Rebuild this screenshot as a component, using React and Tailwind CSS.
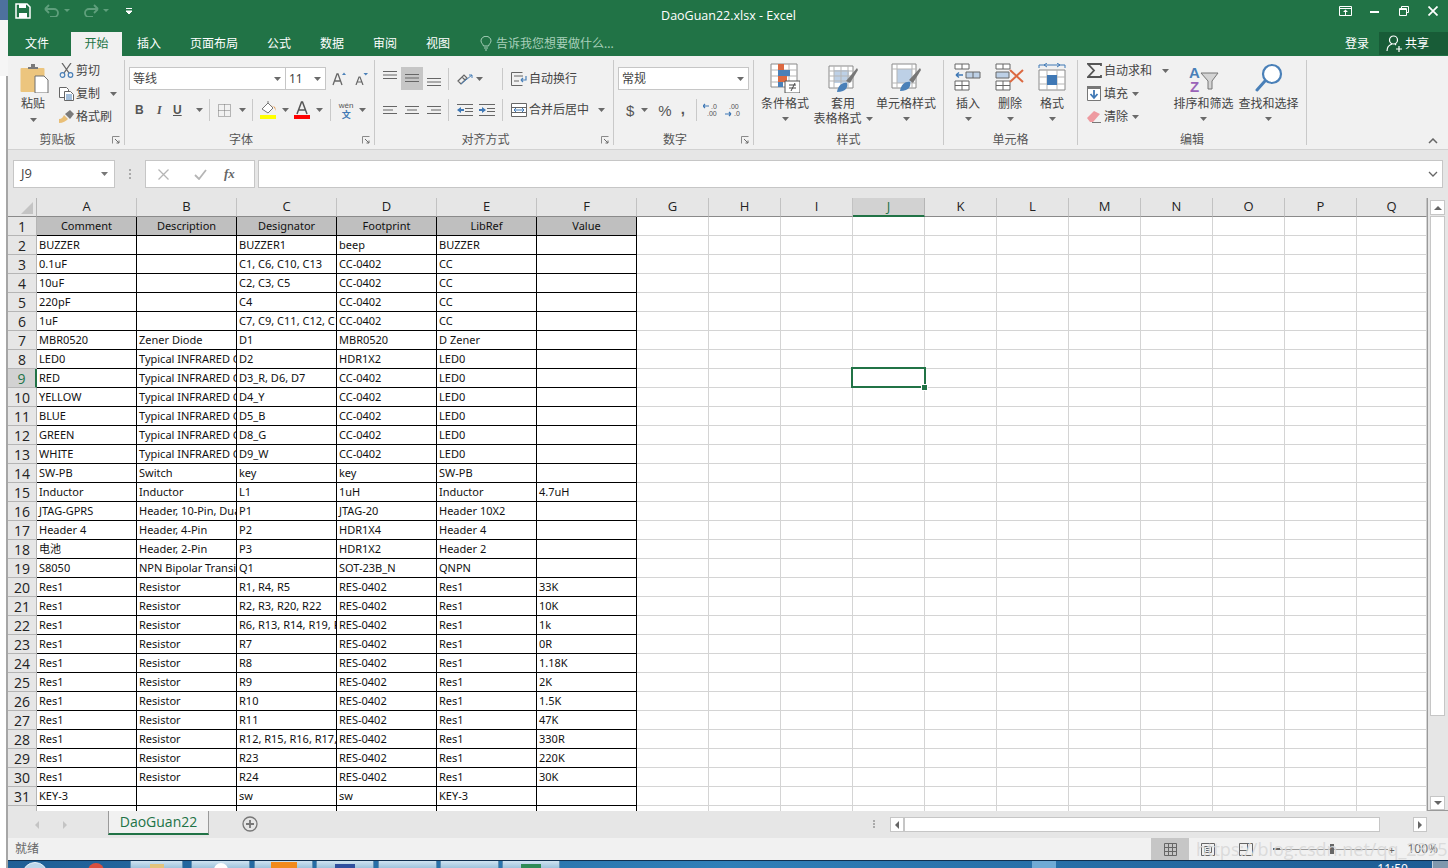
import React from "react";

// spreadsheet content, one array per row (A..F)
const RES = "Resistor";
const IR = "Typical INFRARED GaAs LED";
const ROWS = [
  ["BUZZER", "", "BUZZER1", "beep", "BUZZER", ""],
  ["0.1uF", "", "C1, C6, C10, C13", "CC-0402", "CC", ""],
  ["10uF", "", "C2, C3, C5", "CC-0402", "CC", ""],
  ["220pF", "", "C4", "CC-0402", "CC", ""],
  ["1uF", "", "C7, C9, C11, C12, C14", "CC-0402", "CC", ""],
  ["MBR0520", "Zener Diode", "D1", "MBR0520", "D Zener", ""],
  ["LED0", IR, "D2", "HDR1X2", "LED0", ""],
  ["RED", IR, "D3_R, D6, D7", "CC-0402", "LED0", ""],
  ["YELLOW", IR, "D4_Y", "CC-0402", "LED0", ""],
  ["BLUE", IR, "D5_B", "CC-0402", "LED0", ""],
  ["GREEN", IR, "D8_G", "CC-0402", "LED0", ""],
  ["WHITE", IR, "D9_W", "CC-0402", "LED0", ""],
  ["SW-PB", "Switch", "key", "key", "SW-PB", ""],
  ["Inductor", "Inductor", "L1", "1uH", "Inductor", "4.7uH"],
  ["JTAG-GPRS", "Header, 10-Pin, Dual row", "P1", "JTAG-20", "Header 10X2", ""],
  ["Header 4", "Header, 4-Pin", "P2", "HDR1X4", "Header 4", ""],
  ["电池", "Header, 2-Pin", "P3", "HDR1X2", "Header 2", ""],
  ["S8050", "NPN Bipolar Transistor", "Q1", "SOT-23B_N", "QNPN", ""],
  ["Res1", RES, "R1, R4, R5", "RES-0402", "Res1", "33K"],
  ["Res1", RES, "R2, R3, R20, R22", "RES-0402", "Res1", "10K"],
  ["Res1", RES, "R6, R13, R14, R19, R21", "RES-0402", "Res1", "1k"],
  ["Res1", RES, "R7", "RES-0402", "Res1", "0R"],
  ["Res1", RES, "R8", "RES-0402", "Res1", "1.18K"],
  ["Res1", RES, "R9", "RES-0402", "Res1", "2K"],
  ["Res1", RES, "R10", "RES-0402", "Res1", "1.5K"],
  ["Res1", RES, "R11", "RES-0402", "Res1", "47K"],
  ["Res1", RES, "R12, R15, R16, R17, R18", "RES-0402", "Res1", "330R"],
  ["Res1", RES, "R23", "RES-0402", "Res1", "220K"],
  ["Res1", RES, "R24", "RES-0402", "Res1", "30K"],
  ["KEY-3", "", "sw", "sw", "KEY-3", ""],
  ["", "", "", "", "", ""],
];
const HEAD = ["Comment", "Description", "Designator", "Footprint", "LibRef", "Value"];
const COLS = ["A", "B", "C", "D", "E", "F"];
const EMPTY = ["G", "H", "I", "J", "K", "L", "M", "N", "O", "P", "Q"];

const Caret = ({ className = "" }) => (
  <svg width="7" height="4" viewBox="0 0 7 4" className={`shrink-0 ${className}`}>
    <path d="M0 0h7L3.5 4z" fill="#6a6a6a" />
  </svg>
);

const Launcher = () => (
  <svg width="8" height="8" viewBox="0 0 8 8" className="shrink-0">
    <path d="M0.5 7.5V0.5H7.5" fill="none" stroke="#8a8a8a" />
    <path d="M3 3l4 4M7 4.500V7H4.500" fill="none" stroke="#6a6a6a" />
  </svg>
);

// ribbon group: fixed width, content on top, caption at the bottom
const Group = ({ w, label, launcher, children }) => (
  <div className="flex flex-col h-[85px] shrink-0 border-r border-[#c9c9c9]" style={{ width: w }}>
    <div className="h-[68px] shrink-0 flex">{children}</div>
    <div className="h-[17px] shrink-0 flex items-center pt-[6px]">
      <span className={`w-full text-center text-[12px] leading-none text-[#555] ${launcher ? "pr-[5px]" : ""}`}>{label}</span>
      {launcher && <span className="mr-[4px] flex"><Launcher /></span>}
    </div>
  </div>
);

const Lines = ({ rows }) => (
  <svg width="14" height="11" viewBox="0 0 14 11" className="shrink-0">
    {rows.map((r, i) => (
      <path key={i} d={`M${r[0]} ${i * 3.5 + 1.5}H${r[1]}`} stroke="#666" strokeWidth="1" />
    ))}
  </svg>
);

const TallBtn = ({ w, icon, l1, l2, caretRight, ml = 0 }) => (
  <div className="flex flex-col items-center shrink-0" style={{ width: w, marginLeft: ml }}>
    <div className="h-[33px] flex items-end">{icon}</div>
    <div className="mt-[3px] text-[12px] leading-[15px] text-[#444] whitespace-nowrap">{l1}</div>
    {l2 ? (
      <div className="flex items-center gap-[4px] text-[12px] leading-[15px] text-[#444] whitespace-nowrap">
        {l2}
        {caretRight && <Caret />}
      </div>
    ) : (
      <Caret className="mt-[6px]" />
    )}
  </div>
);

const SmallRow = ({ icon, text, caretMl }) => (
  <div className="h-[23px] flex items-center text-[12px] text-[#444] whitespace-nowrap">
    <span className="w-[18px] flex justify-center shrink-0">{icon}</span>
    <span className="ml-[1px]">{text}</span>
    {caretMl != null && <span className="flex" style={{ marginLeft: caretMl }}><Caret /></span>}
  </div>
);

const Sep = ({ h = 22, ml = 0, mr = 0 }) => <div className="w-px bg-[#c9c9c9] shrink-0" style={{ height: h, marginLeft: ml, marginRight: mr }} />;

const GridIcon = ({ children, w = 30, h = 30 }) => (
  <svg width={w} height={h} viewBox={`0 0 ${w} ${h}`} className="shrink-0">{children}</svg>
);

const WinBtn = ({ children }) => <div className="w-[29px] flex justify-center">{children}</div>;

function TitleBar() {
  return (
    <div className="h-[32px] bg-[#217346] flex items-center shrink-0">
      <svg width="16" height="16" viewBox="0 0 16 16" className="ml-[7px] -mt-[11px] shrink-0">
        <path d="M1 1h11l3 3v11H1z" fill="none" stroke="#fff" strokeWidth="1.500" />
        <path d="M4 1h7v4H4z" fill="#fff" />
        <path d="M4 10h8v5H4z" fill="#fff" />
      </svg>
      <svg width="16" height="13" viewBox="0 0 16 13" className="ml-[13px] -mt-[11px] shrink-0">
        <path d="M1 5h9a4 4 0 0 1 0 8H6M1 5l4-4M1 5l4 4" fill="none" stroke="#5f9f7c" strokeWidth="1.800" />
      </svg>
      <svg width="6" height="3" viewBox="0 0 6 3" className="ml-[4px] -mt-[11px]"><path d="M0 0h6L3 3z" fill="#5f9f7c" /></svg>
      <svg width="16" height="13" viewBox="0 0 16 13" className="ml-[13px] -mt-[11px] shrink-0">
        <path d="M15 5H6a4 4 0 0 0 0 8h4M15 5l-4-4M15 5l-4 4" fill="none" stroke="#5f9f7c" strokeWidth="1.800" />
      </svg>
      <svg width="6" height="3" viewBox="0 0 6 3" className="ml-[4px] -mt-[11px]"><path d="M0 0h6L3 3z" fill="#5f9f7c" /></svg>
      <svg width="6" height="6" viewBox="0 0 6 6" className="ml-[17px] -mt-[11px]"><path d="M0 0.500h6M0 3h6L3 6z" stroke="#fff" fill="#fff" strokeWidth="1" /></svg>
      <div className="flex-1 flex justify-center pr-[6px] text-[12.5px] text-white font-['Open_Sans','Liberation_Sans',sans-serif]">
        DaoGuan22.xlsx - Excel
      </div>
      <div className="flex items-center -mt-[11px] mr-[1px]">
        <WinBtn>
          <svg width="13" height="10" viewBox="0 0 13 10"><path d="M0.500 0.500h12v9H0.500zM0.500 2.500h12" fill="none" stroke="#fff" /><path d="M6.500 3.500L4 6h5zM6 6h1v3H6z" fill="#fff" /></svg>
        </WinBtn>
        <WinBtn><div className="w-[9px] h-[2px] bg-white mt-[3px]" /></WinBtn>
        <WinBtn>
          <svg width="10" height="10" viewBox="0 0 10 10"><path d="M2.500 2.500V0.500h7v6H7.500M0.500 2.500h7v7h-7zM0.500 3.500h7" fill="none" stroke="#fff" /></svg>
        </WinBtn>
        <WinBtn>
          <svg width="10" height="10" viewBox="0 0 10 10"><path d="M0.500 0.500l9 9M9.500 0.500l-9 9" stroke="#fff" strokeWidth="1.700" /></svg>
        </WinBtn>
      </div>
    </div>
  );
}

function TabBar() {
  const tabs = [
    ["插入", 15], ["页面布局", 29], ["公式", 29], ["数据", 29], ["审阅", 29], ["视图", 29],
  ];
  return (
    <div className="h-[24px] bg-[#217346] flex items-stretch text-[12px] leading-[23px] text-white shrink-0">
      <span className="ml-[17px]">文件</span>
      <span className="ml-[22px] w-[51px] bg-[#f1f1f1] text-[#217346] text-center">开始</span>
      {tabs.map(([t, ml]) => (
        <span key={t} style={{ marginLeft: ml }}>{t}</span>
      ))}
      <svg width="12" height="15" viewBox="0 0 12 15" className="ml-[30px] mt-[4px] shrink-0">
        <path d="M3.500 10C3 8 1 7 1 4.800A5 4.500 0 0 1 11 4.800C11 7 9 8 8.500 10zM4 12h4M5 14h2" fill="none" stroke="#a8d0ba" />
      </svg>
      <span className="ml-[4px] text-[12px] text-[#a8d0ba]">告诉我您想要做什么...</span>
      <span className="ml-auto">登录</span>
      <div className="ml-[10px] w-[69px] h-[23px] bg-[#185c37] flex items-center">
        <svg width="17" height="17" viewBox="0 0 17 17" className="ml-[7px] shrink-0">
          <circle cx="7.500" cy="5" r="4" fill="none" stroke="#fff" strokeWidth="1.200" />
          <path d="M1 16c0-4 2-6 5-7M9 9l1 1M10 14h6M13 11v6" fill="none" stroke="#fff" strokeWidth="1.200" />
        </svg>
        <span className="ml-[2px] text-[12px]">共享</span>
      </div>
    </div>
  );
}

function Ribbon() {
  return (
    <div className="h-[94px] bg-[#f1f1f1] border-b border-[#d2d2d2] pt-[4px] flex shrink-0 relative">
      {/* 剪贴板 */}
      <Group w={117} label="剪贴板" launcher>
        <div className="w-[50px] flex flex-col items-center shrink-0">
          <svg width="29" height="29" viewBox="0 0 29 29" className="mt-[4px] ml-[3px] shrink-0">
            <rect x="0.500" y="4" width="24" height="24" rx="1" fill="#ecc57e" />
            <path d="M8 5V3h3V0h4v3h3v2z" fill="#7a7a7a" />
            <path d="M15 12h9l4 4v13H15z" fill="#fff" stroke="#6f6f6f" />
          </svg>
          <span className="mt-[3px] text-[12px] leading-[16px] text-[#444]">粘贴</span>
          <Caret className="mt-[6px]" />
        </div>
        <div className="flex flex-col -ml-[1px] mt-[-1px]">
          <SmallRow text="剪切" icon={
            <svg width="15" height="15" viewBox="0 0 15 15">
              <path d="M3 0l7 10M12 0L5 10" stroke="#666" strokeWidth="1.300" />
              <circle cx="3.500" cy="12" r="2.300" fill="none" stroke="#4a80b8" strokeWidth="1.200" />
              <circle cx="11.500" cy="12" r="2.300" fill="none" stroke="#4a80b8" strokeWidth="1.200" />
            </svg>} />
          <SmallRow text="复制" caretMl={10} icon={
            <svg width="15" height="14" viewBox="0 0 15 14">
              <path d="M0.500 0.500h7l2 2v8h-9z" fill="#fff" stroke="#666" />
              <path d="M5.500 4.500h6l3 3v6h-9z" fill="#fff" stroke="#666" />
              <path d="M7 8h6M7 10h6M7 12h6" stroke="#4a80b8" />
            </svg>} />
          <SmallRow text="格式刷" icon={
            <svg width="15" height="13" viewBox="0 0 15 13">
              <path d="M0 9c3 0 4-2 5-4l4 4c-2 2-5 4-9 4z" fill="#e9bf77" />
              <path d="M6 4l5-4 4 4-4 5z" fill="#7a7a7a" />
            </svg>} />
        </div>
      </Group>

      {/* 字体 */}
      <Group w={250} label="字体" launcher>
        <div className="flex flex-col pl-[4px] w-full">
          <div className="flex items-center mt-[7px]">
            <div className="w-[157px] h-[23px] border border-[#c6c6c6] bg-white flex items-center justify-between pl-[3px] pr-[4px] text-[12px] text-[#444]">
              等线<Caret />
            </div>
            <div className="w-[40px] h-[23px] border border-[#c6c6c6] border-l-0 bg-white flex items-center justify-between pl-[3px] pr-[4px] text-[12px] text-[#444]">
              11<Caret />
            </div>
            <svg width="14" height="14" viewBox="0 0 14 14" className="ml-[6px]">
              <path d="M1 13L5 2h1l4 11M3 9h5" fill="none" stroke="#666" strokeWidth="1.300" />
              <path d="M10 3l2-2.500L14 3z" fill="#4a80b8" />
            </svg>
            <svg width="13" height="12" viewBox="0 0 13 12" className="ml-[9px]">
              <path d="M1 12L4 4h1l3 8M2.500 9h4" fill="none" stroke="#666" strokeWidth="1.200" />
              <path d="M8.500 0h4.500l-2.250 2.500z" fill="#4a80b8" />
            </svg>
          </div>
          <div className="flex items-center mt-[9px] h-[22px]">
            <span className="ml-[6px] w-[16px] text-[12px] font-bold text-[#555] font-['Liberation_Sans',sans-serif]">B</span>
            <span className="ml-[6px] w-[12px] text-[12px] italic font-['Liberation_Serif',serif] font-bold text-[#555]">I</span>
            <span className="ml-[4px] text-[12px] font-bold underline text-[#555] font-['Liberation_Sans',sans-serif]">U</span>
            <Caret className="ml-[14px]" />
            <Sep ml={6} mr={8} />
            <svg width="13" height="13" viewBox="0 0 13 13" className="shrink-0">
              <path d="M0.500 0.500h12v12h-12zM6.500 0.500v12M0.500 6.500h12" fill="none" stroke="#777" strokeDasharray="1 1" />
            </svg>
            <Caret className="ml-[8px]" />
            <Sep ml={6} mr={7} />
            <svg width="16" height="18" viewBox="0 0 16 18" className="shrink-0">
              <path d="M2 8l6-6 5 5-5 5zM8 2V0" fill="#fff" stroke="#777" />
              <path d="M10 4l4 2 2 4-1-4z" fill="#e68a2e" />
              <path d="M0 14h16v4H0z" fill="#ffff00" />
            </svg>
            <Caret className="ml-[6px]" />
            <svg width="16" height="18" viewBox="0 0 16 18" className="ml-[5px] shrink-0">
              <path d="M3 13L7.500 1h1L13 13M5 9h6" fill="none" stroke="#555" strokeWidth="1.500" />
              <path d="M0 14h16v4H0z" fill="#ff0000" />
            </svg>
            <Caret className="ml-[6px]" />
            <Sep ml={7} mr={7} />
            <div className="flex flex-col items-center w-[17px] leading-none shrink-0">
              <span className="text-[8px] text-[#555] font-['Liberation_Sans',sans-serif]">wén</span>
              <span className="text-[9px] text-[#3f78b5] font-bold">文</span>
            </div>
            <Caret className="ml-[4px]" />
          </div>
        </div>
      </Group>

      {/* 对齐方式 */}
      <Group w={239} label="对齐方式" launcher>
        <div className="flex flex-col pl-[8px] w-full">
          <div className="flex items-center h-[23px] mt-[7px]">
            <span className="flex w-[15px] self-start mt-[3px]"><Lines rows={[[0, 14], [0, 14], [0, 14]]} /></span>
            <span className="flex items-center justify-center w-[22px] h-[23px] ml-[3px] bg-[#c6c6c6]"><Lines rows={[[0, 14], [0, 14], [0, 14]]} /></span>
            <span className="flex w-[14px] ml-[4px] self-end mb-[2px]"><Lines rows={[[0, 14], [0, 14], [0, 14]]} /></span>
            <Sep ml={7} mr={8} />
            <svg width="16" height="15" viewBox="0 0 16 15" className="shrink-0">
              <path d="M1 10l6-6 3 3-6 6zM5 6l3 3" fill="none" stroke="#666" strokeWidth="1.200" />
              <path d="M4 13l11-9M15 4v3M15 4h-3" fill="none" stroke="#4a80b8" />
            </svg>
            <Caret className="ml-[3px]" />
            <Sep ml={19} mr={7} />
            <SmallRow text="自动换行" icon={
              <svg width="16" height="14" viewBox="0 0 16 14">
                <path d="M0.500 0.500v13h11M0.500 0.500h11M3 4h9M3 9h5" fill="none" stroke="#666" />
                <path d="M15 4v4h-5M10 8l2-2M10 8l2 2" fill="none" stroke="#4a80b8" strokeWidth="1.200" />
              </svg>} />
          </div>
          <div className="flex items-center h-[22px] mt-[9px]">
            <span className="flex w-[15px]"><Lines rows={[[0, 14], [0, 10], [0, 14]]} /></span>
            <span className="flex w-[15px] ml-[7px]"><Lines rows={[[0, 14], [2, 12], [0, 14]]} /></span>
            <span className="flex w-[14px] ml-[7px]"><Lines rows={[[0, 14], [4, 14], [0, 14]]} /></span>
            <Sep ml={7} mr={8} />
            <svg width="16" height="12" viewBox="0 0 16 12" className="shrink-0">
              <path d="M0 0.500h16M8 4.500h8M8 7.500h8M0 11.500h16" stroke="#666" />
              <path d="M0 6l4-3v2h3v2H4v2z" fill="#3f78b5" />
            </svg>
            <svg width="16" height="12" viewBox="0 0 16 12" className="ml-[6px] shrink-0">
              <path d="M0 0.500h16M8 4.500h8M8 7.500h8M0 11.500h16" stroke="#666" />
              <path d="M7 6L3 3v2H0v2h3v2z" fill="#3f78b5" />
            </svg>
            <Sep ml={7} mr={7} />
            <SmallRow text="合并后居中" caretMl={9} icon={
              <svg width="16" height="14" viewBox="0 0 16 14">
                <path d="M0.500 0.500h15v13h-15zM0.500 4.500h15M0.500 9.500h15" fill="#fff" stroke="#666" />
                <path d="M3 7h10M3 7l2-2M3 7l2 2M13 7l-2-2M13 7l-2 2" fill="none" stroke="#3f78b5" />
              </svg>} />
          </div>
        </div>
      </Group>

      {/* 数字 */}
      <Group w={140} label="数字" launcher>
        <div className="flex flex-col pl-[4px] w-full">
          <div className="w-[131px] h-[23px] mt-[7px] border border-[#c6c6c6] bg-white flex items-center justify-between pl-[3px] pr-[4px] text-[12px] text-[#444]">
            常规<Caret />
          </div>
          <div className="flex items-center h-[22px] mt-[9px] text-[#555] font-['Liberation_Sans',sans-serif]">
            <span className="ml-[8px] text-[15px] leading-none">$</span>
            <Caret className="ml-[7px]" />
            <span className="ml-[10px] text-[15px] leading-none">%</span>
            <span className="ml-[9px] text-[15px] leading-none font-bold -mt-[3px]">,</span>
            <span className="ml-[11px] flex"><Sep /></span>
            <svg width="17" height="14" viewBox="0 0 17 14" className="ml-[6px] shrink-0">
              <path d="M0 3h6M0 3l2-2M0 3l2 2" fill="none" stroke="#3f78b5" strokeWidth="1.200" />
              <text x="8" y="6" fontSize="7" fill="#555" fontFamily="Liberation Sans">.0</text>
              <text x="4" y="13" fontSize="7" fill="#555" fontFamily="Liberation Sans">.00</text>
            </svg>
            <svg width="17" height="14" viewBox="0 0 17 14" className="ml-[5px] shrink-0">
              <text x="4" y="6" fontSize="7" fill="#555" fontFamily="Liberation Sans">.00</text>
              <path d="M0 11h6M6 11l-2-2M6 11l-2 2" fill="none" stroke="#3f78b5" strokeWidth="1.200" />
              <text x="9" y="13" fontSize="7" fill="#555" fontFamily="Liberation Sans">.0</text>
            </svg>
          </div>
        </div>
      </Group>

      {/* 样式 */}
      <Group w={190} label="样式">
        <TallBtn w={62} l1="条件格式" icon={
          <GridIcon>
            <path d="M1 1h26v23H1z" fill="#fff" stroke="#8a8a8a" />
            <path d="M1 7h26M1 13h26M1 19h26M9 1v23M19 1v23" stroke="#b5b5b5" />
            <path d="M8 1h6v6H8zM8 13h9v6H8z" fill="#dc6941" />
            <path d="M8 7h12v6H8zM8 19h5v5H8z" fill="#4a80b8" />
            <path d="M15 18h15v12H15z" fill="#fff" stroke="#555" />
            <path d="M19 22h7M19 25h7M25 20l-4 8" stroke="#444" />
          </GridIcon>} />
        <TallBtn w={54} l1="套用" l2="表格格式" caretRight icon={
          <GridIcon>
            <path d="M1 3h24v22H1z" fill="#fff" stroke="#8a8a8a" />
            <path d="M6 7h15v13H6z" fill="#bdd0e6" />
            <path d="M1 8h24M1 13h24M1 18h24M6 3v22M13 3v22M20 3v22" stroke="#b5b5b5" />
            <path d="M18 18L29 5l1 2-8 13z" fill="#777" />
            <path d="M9 29c1-7 6-10 10-9 1 3 0 9-10 9z" fill="#4a80b8" />
          </GridIcon>} />
        <TallBtn w={72} l1="单元格样式" icon={
          <GridIcon>
            <path d="M1 1h24v24H1z" fill="#fff" stroke="#8a8a8a" />
            <path d="M6 6h15v14H6z" fill="#bdd0e6" />
            <path d="M1 6h24M6 1v24M21 1v24M1 20h24" stroke="#b5b5b5" />
            <path d="M18 17L29 5l1 2-8 13z" fill="#777" />
            <path d="M9 28c1-7 6-10 10-9 1 3 0 9-10 9z" fill="#4a80b8" />
          </GridIcon>} />
      </Group>

      {/* 单元格 */}
      <Group w={134} label="单元格">
        <TallBtn w={42} ml={3} l1="插入" icon={
          <GridIcon w={28}>
            <path d="M1 1h14v5H1zM8 1v5M1 18h14v9H1zM1 22.500h14M8 18v9" fill="#fff" stroke="#666" />
            <path d="M12 9h14v6H12zM19 9v6" fill="#bdd0e6" stroke="#666" />
            <path d="M2 12h7M2 12l3-2.500M2 12l3 2.500" fill="none" stroke="#3f78b5" strokeWidth="1.500" />
          </GridIcon>} />
        <TallBtn w={42} l1="删除" icon={
          <GridIcon w={30}>
            <path d="M1 1h14v5H1zM8 1v5M1 18h14v9H1zM1 22.500h14M8 18v9" fill="#fff" stroke="#666" />
            <path d="M1 9h13v6H1z" fill="#bdd0e6" stroke="#666" />
            <path d="M15 7l13 12M28 7L15 19" stroke="#dc6941" strokeWidth="2" />
          </GridIcon>} />
        <TallBtn w={42} l1="格式" icon={
          <GridIcon w={28}>
            <path d="M1 2h26M1 2v3M27 2v3M6 2l3-2M6 2l3 2M22 2l-3-2M22 2l-3 2" fill="none" stroke="#3f78b5" />
            <path d="M1 7h26v20H1z" fill="#fff" stroke="#8a8a8a" />
            <path d="M1 14h26M1 21h26M9 7v20M19 7v20" stroke="#b5b5b5" />
            <path d="M9 12h10v10H9z" fill="#3f78b5" />
          </GridIcon>} />
      </Group>

      {/* 编辑 */}
      <Group w={229} label="编辑">
        <div className="flex flex-col w-[93px] pl-[7px] shrink-0 -mt-[1px]">
          <SmallRow text="自动求和" caretMl={10} icon={
            <svg width="15" height="15" viewBox="0 0 15 15"><path d="M14 3V1H1l6 6.500L1 14h13v-2" fill="none" stroke="#555" strokeWidth="1.800" /></svg>} />
          <SmallRow text="填充" caretMl={4} icon={
            <svg width="14" height="15" viewBox="0 0 14 15">
              <path d="M0.500 0.500h13v14h-13z" fill="#fff" stroke="#777" />
              <path d="M0 0h14v3H0z" fill="#777" />
              <path d="M7 4v7M3.500 8L7 12l3.500-4" fill="none" stroke="#3f78b5" strokeWidth="1.800" />
            </svg>} />
          <SmallRow text="清除" caretMl={4} icon={
            <svg width="14" height="13" viewBox="0 0 14 13">
              <path d="M0 8l7-7 6 3-7 8H3z" fill="#ee9aa0" />
              <path d="M5 12.500h9" stroke="#777" />
            </svg>} />
        </div>
        <TallBtn w={65} l1="排序和筛选" icon={
          <GridIcon w={30} h={28}>
            <text x="0" y="13" fontSize="15" fontWeight="700" fill="#4a80b8" fontFamily="Liberation Sans">A</text>
            <text x="1" y="27" fontSize="15" fontWeight="700" fill="#9a63b8" fontFamily="Liberation Sans">Z</text>
            <path d="M12 8h17l-6 8v8h-4v-8z" fill="#d4d4d4" stroke="#777" />
          </GridIcon>} />
        <TallBtn w={65} l1="查找和选择" icon={
          <GridIcon w={28}>
            <circle cx="17" cy="11" r="9" fill="#fff" stroke="#4a80b8" strokeWidth="2.200" />
            <path d="M10 18L2 27" stroke="#4a80b8" strokeWidth="3" strokeLinecap="round" />
          </GridIcon>} />
      </Group>

      <svg width="10" height="6" viewBox="0 0 10 6" className="absolute right-[10px] bottom-[5px]">
        <path d="M1 5l4-4 4 4" fill="none" stroke="#666" strokeWidth="1.500" />
      </svg>
    </div>
  );
}

function FormulaBar() {
  return (
    <div className="h-[48px] bg-[#e6e6e6] pt-[10px] shrink-0">
      <div className="flex h-[28px] items-stretch">
        <div className="ml-[5px] w-[102px] bg-white border border-[#c6c6c6] flex items-center justify-between pl-[7px] pr-[6px] text-[13px] text-[#444] font-['Open_Sans',sans-serif]">
          J9<svg width="7" height="4" viewBox="0 0 7 4"><path d="M0 0h7L3.500 4z" fill="#777" /></svg>
        </div>
        <div className="w-[30px] flex flex-col items-center justify-center gap-[2px]">
          <span className="w-[2px] h-[2px] bg-[#aaa]" />
          <span className="w-[2px] h-[2px] bg-[#aaa]" />
          <span className="w-[2px] h-[2px] bg-[#aaa]" />
        </div>
        <div className="w-[110px] bg-white border border-[#c6c6c6] flex items-center">
          <svg width="11" height="11" viewBox="0 0 11 11" className="ml-[12px]"><path d="M0.500 0.500l10 10M10.500 0.500l-10 10" stroke="#b5b5b5" strokeWidth="1.300" /></svg>
          <svg width="13" height="11" viewBox="0 0 13 11" className="ml-[25px]"><path d="M1 6l4 4 7-9" fill="none" stroke="#b5b5b5" strokeWidth="1.800" /></svg>
          <span className="ml-[17px] text-[13px] italic font-bold text-[#666] font-['Liberation_Serif',serif]">fx</span>
        </div>
        <div className="ml-[3px] w-[1185px] bg-white border border-[#c6c6c6] flex items-center justify-end pr-[4px]">
          <svg width="10" height="6" viewBox="0 0 10 6"><path d="M1 1l4 4 4-4" fill="none" stroke="#666" strokeWidth="1.300" /></svg>
        </div>
      </div>
    </div>
  );
}

function ColumnHeaders() {
  return (
    <div className="h-[19px] flex shrink-0 bg-[#e6e6e6] text-[13px] text-[#222] font-['Open_Sans','Liberation_Sans',sans-serif]">
      <div className="w-[29px] shrink-0 flex items-end justify-end border-r border-[#b5b5b5] border-b border-b-[#8a8a8a] pr-[3px] pb-[2px]">
        <svg width="12" height="12" viewBox="0 0 12 12"><path d="M12 0v12H0z" fill="#c4c4c4" /></svg>
      </div>
      {COLS.map((c) => (
        <div key={c} className="w-[100px] shrink-0 flex items-center justify-center border-r border-[#c2c2c2] border-b border-b-[#8a8a8a]">{c}</div>
      ))}
      {EMPTY.map((c) =>
        c === "J" ? (
          <div key={c} className="w-[72px] shrink-0 flex items-center justify-center bg-[#d2d2d2] text-[#217346] border-r border-[#b5b5b5] border-b-2 border-b-[#217346]">{c}</div>
        ) : (
          <div key={c} className={`${c === "Q" ? "w-[70px]" : "w-[72px]"} shrink-0 flex items-center justify-center border-r border-[#c2c2c2] border-b border-b-[#8a8a8a]`}>{c}</div>
        )
      )}
    </div>
  );
}

function Row({ n, cells, head }) {
  const active = n === 9;
  return (
    <div className="h-[19px] flex shrink-0">
      <div className={`w-[29px] shrink-0 flex items-center justify-center text-[14px] border-r border-b border-[#b5b5b5] font-['Open_Sans','Liberation_Sans',sans-serif] ${active ? "bg-[#d2d2d2] text-[#217346] border-r-[#217346] border-r-2" : "bg-[#e6e6e6] text-[#222]"}`}>{n}</div>
      {cells.map((v, i) => (
        <div
          key={i}
          className={`w-[100px] shrink-0 box-border border-r border-b border-black overflow-hidden whitespace-nowrap text-[11px] leading-[18px] text-[#111] ${head ? "bg-[#bfbfbf] text-center" : "bg-white pl-[2px]"}`}
        >
          {v}
        </div>
      ))}
      {EMPTY.map((c) => (
        <div key={c} className={`${c === "Q" ? "w-[70px]" : "w-[72px]"} shrink-0 bg-white border-r border-b border-[#d4d4d4]`} />
      ))}
    </div>
  );
}

function Sheet() {
  return (
    <div className="flex-1 flex bg-[#e6e6e6] min-h-0">
      <div className="w-[1420px] shrink-0 flex flex-col overflow-hidden relative border-r border-[#9a9a9a]">
        <ColumnHeaders />
        <Row n={1} cells={HEAD} head />
        {ROWS.map((r, i) => <Row key={i} n={i + 2} cells={r} />)}
        {/* J9 selection */}
        <div className="absolute left-[843px] top-[169px] w-[75px] h-[21px] border-2 border-[#217346]" />
        <div className="absolute left-[913px] top-[186px] w-[5px] h-[5px] bg-[#217346] border border-white box-content" />
      </div>
      <div className="w-[20px] shrink-0 flex flex-col items-center pt-[2px] pl-[2px] pr-[3px]">
        <div className="w-[15px] h-[15px] bg-white border border-[#c6c6c6] flex items-center justify-center">
          <svg width="8" height="4" viewBox="0 0 8 4"><path d="M0 4h8L4 0z" fill="#666" /></svg>
        </div>
        <div className="w-[15px] h-[500px] bg-white border border-[#c6c6c6] mt-[1px]" />
        <div className="flex-1" />
        <div className="w-[15px] h-[14px] bg-white border border-[#c6c6c6] flex items-center justify-center mb-[1px]">
          <svg width="8" height="4" viewBox="0 0 8 4"><path d="M0 0h8L4 4z" fill="#666" /></svg>
        </div>
      </div>
    </div>
  );
}

function SheetTabs() {
  return (
    <div className="h-[28px] bg-[#e6e6e6] border-t border-[#9a9a9a] flex items-start shrink-0 -mt-px">
      <svg width="4" height="8" viewBox="0 0 4 8" className="ml-[27px] mt-[10px]"><path d="M4 0v8L0 4z" fill="#c4c4c4" /></svg>
      <svg width="4" height="8" viewBox="0 0 4 8" className="ml-[24px] mt-[10px]"><path d="M0 0v8l4-4z" fill="#c4c4c4" /></svg>
      <div className="ml-[41px] w-[101px] h-[25px] -mt-px bg-[#f1f1f1] border-l border-r border-[#9a9a9a] border-b-2 border-b-[#217346] text-center text-[14px] leading-[24px] text-[#217346] font-['Open_Sans',sans-serif]">DaoGuan22</div>
      <svg width="16" height="16" viewBox="0 0 16 16" className="ml-[33px] mt-[5px]">
        <circle cx="8" cy="8" r="7" fill="none" stroke="#777" strokeWidth="1.300" />
        <path d="M4 8h8M8 4v8" stroke="#777" strokeWidth="1.800" />
      </svg>
      <div className="ml-[615px] mt-[9px] flex flex-col gap-[1px]">
        <span className="w-[2px] h-[2px] bg-[#aaa]" />
        <span className="w-[2px] h-[2px] bg-[#aaa]" />
        <span className="w-[2px] h-[2px] bg-[#aaa]" />
      </div>
      <div className="ml-[15px] mt-[6px] w-[14px] h-[15px] bg-white border border-[#c6c6c6] flex items-center justify-center">
        <svg width="4" height="8" viewBox="0 0 4 8"><path d="M4 0v8L0 4z" fill="#666" /></svg>
      </div>
      <div className="mt-[6px] w-[476px] h-[15px] bg-white border border-[#c6c6c6]" />
      <div className="mt-[6px] w-[33px] h-[15px]" />
      <div className="mt-[6px] w-[14px] h-[15px] bg-white border border-[#c6c6c6] flex items-center justify-center">
        <svg width="4" height="8" viewBox="0 0 4 8"><path d="M0 0v8l4-4z" fill="#666" /></svg>
      </div>
    </div>
  );
}

function StatusBar() {
  return (
    <div className="h-[22px] bg-[#f1f1f1] flex items-center shrink-0 relative text-[#666]">
      <span className="ml-[7px] text-[12px]">就绪</span>
      <div className="ml-auto flex items-center h-full mr-[10px]">
        <div className="w-[38px] h-full bg-[#c6c6c6] flex items-center justify-center">
          <svg width="13" height="13" viewBox="0 0 13 13"><path d="M0.500 0.500h12v12h-12zM4.500 0.500v12M8.500 0.500v12M0.500 4.500h12M0.500 8.500h12" fill="none" stroke="#666" /></svg>
        </div>
        <div className="w-[38px] flex justify-center">
          <svg width="14" height="13" viewBox="0 0 14 13"><path d="M0.500 0.500h13v12h-13zM3.500 3.500h7v6h-7zM5 5.500h4M5 7.500h4" fill="none" stroke="#666" /></svg>
        </div>
        <div className="w-[38px] flex justify-center">
          <svg width="14" height="13" viewBox="0 0 14 13"><path d="M0.500 0.500h13v12h-13zM0.500 7.500h8M8.500 0.500v7" fill="none" stroke="#666" /></svg>
        </div>
        <div className="ml-[8px] flex items-center w-[124px]">
          <span className="w-[7px] h-[2px] bg-[#666]" />
          <span className="w-[50px] h-px bg-[#999]" />
          <span className="w-[4px] h-[10px] bg-[#666]" />
          <span className="w-[54px] h-px bg-[#999]" />
          <span className="text-[11px] leading-none">+</span>
        </div>
        <span className="ml-[10px] text-[12px] font-['Open_Sans',sans-serif]">100%</span>
      </div>
      {/* watermark */}
      <span className="absolute left-[1188px] top-0 text-[18px] leading-[22px] text-[#d8d8d8]/90 font-['Open_Sans',sans-serif] whitespace-nowrap">https://blog.csdn.net/qq_23953404</span>
    </div>
  );
}

function Taskbar() {
  const btns = [[122, 53], [8, 59], [4, 59], [3, 58], [4, 59], [3, 59], [3, 58]];
  return (
    <div className="h-[8px] overflow-hidden flex shrink-0 border-t border-[#0f2f4f] bg-gradient-to-r from-[#1f5f96] via-[#2f7fb8] to-[#1d5c94] relative">
      {btns.map(([ml, w], i) => (
        <div key={i} className="h-full flex justify-center bg-gradient-to-b from-[#cfe3f1] to-[#9ec3dc] border-x border-[#5f8fb3]" style={{ marginLeft: ml, width: w }}>
          {i === 0 && <div className="w-[14px] h-full mt-[3px] bg-[#e3c37c]" />}
          {i === 1 && <div className="w-[14px] h-[14px] mt-[2px] rounded-full bg-white" />}
          {i === 2 && <div className="w-[26px] h-full mt-[1px] bg-[#f28a1c]" />}
          {i === 3 && <div className="w-[20px] h-full mt-[3px] bg-[#2f4f9e]" />}
          {i === 6 && <div className="w-[20px] h-full mt-[3px] bg-[#2e8b57]" />}
        </div>
      ))}
      {/* start orb and browser icon, cut off by the window edge */}
      <div className="absolute left-[14px] top-[1px] w-[26px] h-[26px] rounded-full bg-[#bcd6ea] border border-[#e8f2f9]" />
      <div className="absolute left-[80px] top-[2px] w-[16px] h-[16px] rounded-full bg-[#d9503f]" />
      <div className="absolute right-[392px] top-0 w-[24px] h-full bg-[#8fc3e8]/70" />
      <span className="absolute right-[40px] top-[2px] text-[12px] leading-[12px] text-white">11:50</span>
      <div className="absolute right-0 top-0 w-[16px] h-full bg-[#7f98ad] border-l border-[#c4d2dd]" />
    </div>
  );
}

export default function App() {
  return (
    <div className="w-[1448px] h-[868px] flex overflow-hidden bg-white font-['Noto_Sans','Noto_Sans_CJK_SC',sans-serif]">
      <div className="w-[8px] shrink-0 flex flex-col">
        <div className="h-[20px] bg-[#4d719e]" />
        <div className="h-[56px] bg-[#f5f5f5]" />
        <div className="flex-1 bg-white border-r-2 border-[#a6a6a6]" />
      </div>
      <div className="flex-1 min-w-0 flex flex-col">
        <TitleBar />
        <TabBar />
        <Ribbon />
        <FormulaBar />
        <Sheet />
        <SheetTabs />
        <StatusBar />
        <Taskbar />
      </div>
    </div>
  );
}
